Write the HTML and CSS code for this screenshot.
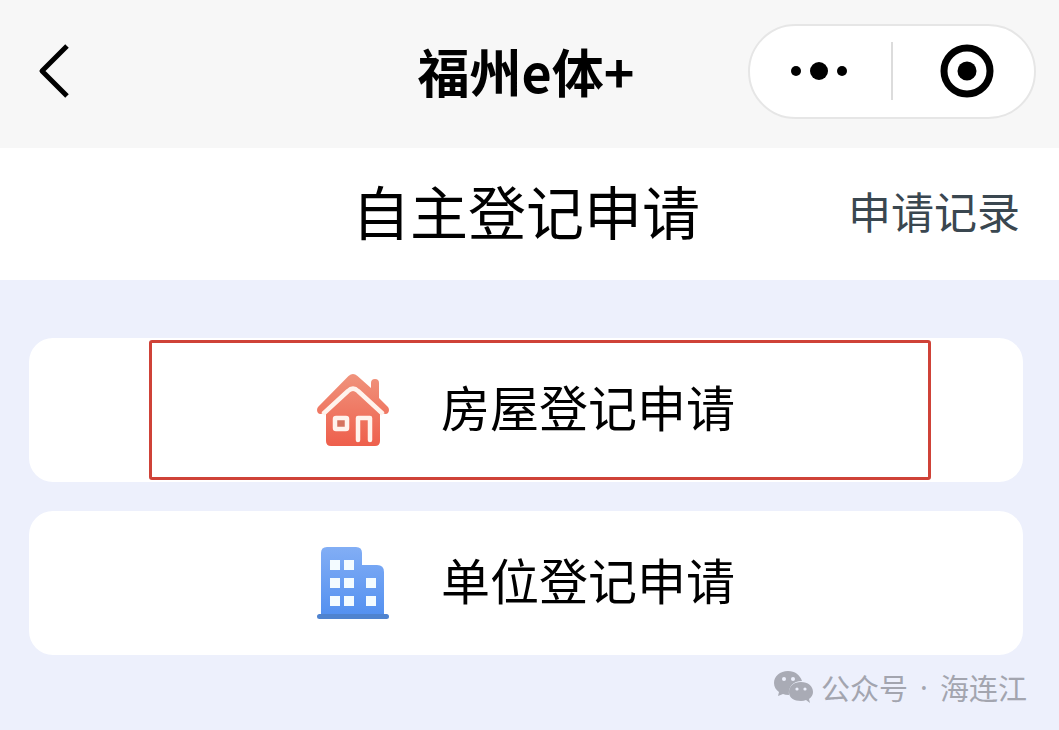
FILE: index.html
```html
<!DOCTYPE html>
<html lang="zh-CN">
<head>
    <meta charset="UTF-8">
    <meta name="viewport" content="width=device-width, initial-scale=1.0">
    <title>福州e体+</title>
    <link rel="stylesheet" href="styles.css">
</head>
<body>
    <header class="navbar">
        <button type="button" class="back" aria-label="返回">
            <svg width="32" height="56" viewBox="0 0 32 56"><path d="M29 3 L4 28 L29 53" fill="none" stroke="#000" stroke-width="5" stroke-linejoin="round"/></svg>
        </button>
        <h1>福州e体+</h1>
        <div class="capsule">
            <button type="button" aria-label="更多">
                <svg width="62" height="20" viewBox="0 0 62 20"><circle cx="6" cy="10" r="5"/><circle cx="29" cy="10" r="9"/><circle cx="52" cy="10" r="5"/></svg>
            </button>
            <span class="line"></span>
            <button type="button" aria-label="关闭">
                <svg width="60" height="54" viewBox="-6 0 60 54"><circle cx="27" cy="27" r="23" fill="none" stroke="#000" stroke-width="7"/><circle cx="27" cy="27" r="9.5"/></svg>
            </button>
        </div>
    </header>

    <div class="titlebar">
        <h2>自主登记申请</h2>
        <a href="#records">申请记录</a>
    </div>

    <main>
        <button type="button" class="card">
            <svg class="icon" viewBox="0 0 72 72">
                <defs>
                    <linearGradient id="red" x1="0" y1="0" x2="0" y2="1">
                        <stop offset="0" stop-color="#f0937c"/>
                        <stop offset="1" stop-color="#ee5f4c"/>
                    </linearGradient>
                </defs>
                <path fill="url(#red)" d="M31.500 2 Q36 -2 40.500 2 L54 14 V9 Q54 5 58 5 Q62 5 62 9 V24 L71 33 Q73 36 71 39 Q69 41 66 39 L63 37 V67 Q63 72 58 72 H14 Q9 72 9 67 V37 L6 39 Q3 41 1 39 Q-1 36 1 33 Z"/>
                <path fill="none" stroke="#fff3ed" stroke-width="4.500" stroke-linejoin="round" d="M6 40 L31 17 Q36 12 41 17 L66 40"/>
                <rect x="18" y="44" width="12" height="11" rx="1" fill="#d5735f" stroke="#fff3ed" stroke-width="4.500"/>
                <path fill="none" stroke="#fff3ed" stroke-width="4.500" stroke-linecap="round" stroke-linejoin="round" d="M41 66 V44 H53 V66"/>
            </svg>
            <span>房屋登记申请</span>
            <i class="mark"></i>
        </button>
        <button type="button" class="card">
            <svg class="icon" viewBox="0 0 72 72">
                <defs>
                    <linearGradient id="blue" x1="0" y1="0" x2="0" y2="1">
                        <stop offset="0" stop-color="#82aef5"/>
                        <stop offset="1" stop-color="#5390f0"/>
                    </linearGradient>
                </defs>
                <path fill="url(#blue)" d="M4 69 V6 Q4 0 10 0 H39 Q45 0 45 6 V18 H60 Q67 18 67 25 V69 Z"/>
                <rect x="0" y="67" width="72" height="5" rx="2.500" fill="#4f83cf"/>
                <path fill="#f3fbff" d="M13 13h10v10h-10z M27 13h10v10h-10z M13 31h10v10h-10z M27 31h10v10h-10z M13 49h10v10h-10z M27 49h10v10h-10z M49 31h10v10h-10z M49 49h10v10h-10z"/>
            </svg>
            <span>单位登记申请</span>
        </button>
    </main>

    <footer>
        <svg width="40" height="34" viewBox="0 0 40 34">
            <path fill="#a9abb5" d="M14 1 C6 1 0 6 0 13 C0 17 2 20 5 22 L4 26 L9 24 Q11 25 15 25 C14 17 19 11 28 11 C26 5 21 1 14 1 Z"/>
            <path fill="#a9abb5" d="M27 12 C20 12 15 16 15 22 C15 28 20 31 27 31 Q30 31 32 30 L36 33 L35 29 Q39 26 39 22 C39 16 34 12 27 12 Z"/>
            <g fill="#edf0fc"><circle cx="10" cy="9" r="2"/><circle cx="19" cy="9" r="2"/><circle cx="23" cy="19" r="1.600"/><circle cx="31" cy="19" r="1.600"/></g>
        </svg>
        <span>公众号</span>
        <span class="dot">·</span>
        <span>海连江</span>
    </footer>
</body>
</html>
```
FILE: styles.css
```css
*{
    margin: 0;
    padding: 0;
    box-sizing: border-box;
}
body{
    background-color: #edf0fc;
    font-family: "Noto Sans CJK SC", sans-serif;
    color: #000;
}
button{
    border: none;
    background: none;
    font-family: inherit;
    color: inherit;
    cursor: pointer;
}
svg{
    display: block;
}
.navbar{
    display: grid;
    grid-template-columns: 1fr auto 1fr;
    align-items: center;
    height: 148px;
    padding: 0 23px 6px 16px;
    background-color: #f7f7f7;
}
.back{
    justify-self: start;
    margin-left: 22px;
}
h1{
    font-size: 52px;
    line-height: 60px;
    font-weight: 700;
}
.capsule{
    justify-self: end;
    display: flex;
    align-items: center;
    width: 288px;
    height: 95px;
    border: 2px solid #e6e6e6;
    border-radius: 48px;
    background-color: #fff;
}
.capsule button{
    flex: 1;
    display: flex;
    justify-content: center;
}
.line{
    width: 2px;
    height: 58px;
    background-color: #dcdcdc;
}
.titlebar{
    display: grid;
    grid-template-columns: 1fr auto 1fr;
    align-items: center;
    height: 132px;
    padding: 0 39px 8px 32px;
    background-color: #fff;
}
.titlebar h2{
    grid-column: 2;
    font-size: 58px;
    line-height: 64px;
    font-weight: 400;
}
.titlebar a{
    justify-self: end;
    font-size: 43px;
    line-height: 48px;
    color: #3a4750;
    text-decoration: none;
}
main{
    display: flex;
    flex-direction: column;
    gap: 29px;
    padding: 58px 36px 0 29px;
}
.card{
    position: relative;
    display: flex;
    align-items: center;
    justify-content: center;
    gap: 52px;
    height: 144px;
    border-radius: 24px;
    background-color: #fff;
    font-size: 49px;
    line-height: 56px;
}
.card span{
    padding-bottom: 8px;
}
.icon{
    width: 72px;
    height: 72px;
}
.mark{
    position: absolute;
    top: 2px;
    right: 92px;
    bottom: 2px;
    left: 120px;
    border: 3px solid #cf4238;
    border-radius: 3px;
}
footer{
    display: flex;
    align-items: center;
    justify-content: flex-end;
    padding: 12px 32px 0 0;
    font-size: 29px;
    line-height: 40px;
    color: #a3a5af;
}
footer svg{
    margin-right: 7px;
}
.dot{
    width: 32px;
    font-family: "Noto Sans", sans-serif;
    text-align: center;
}
```
